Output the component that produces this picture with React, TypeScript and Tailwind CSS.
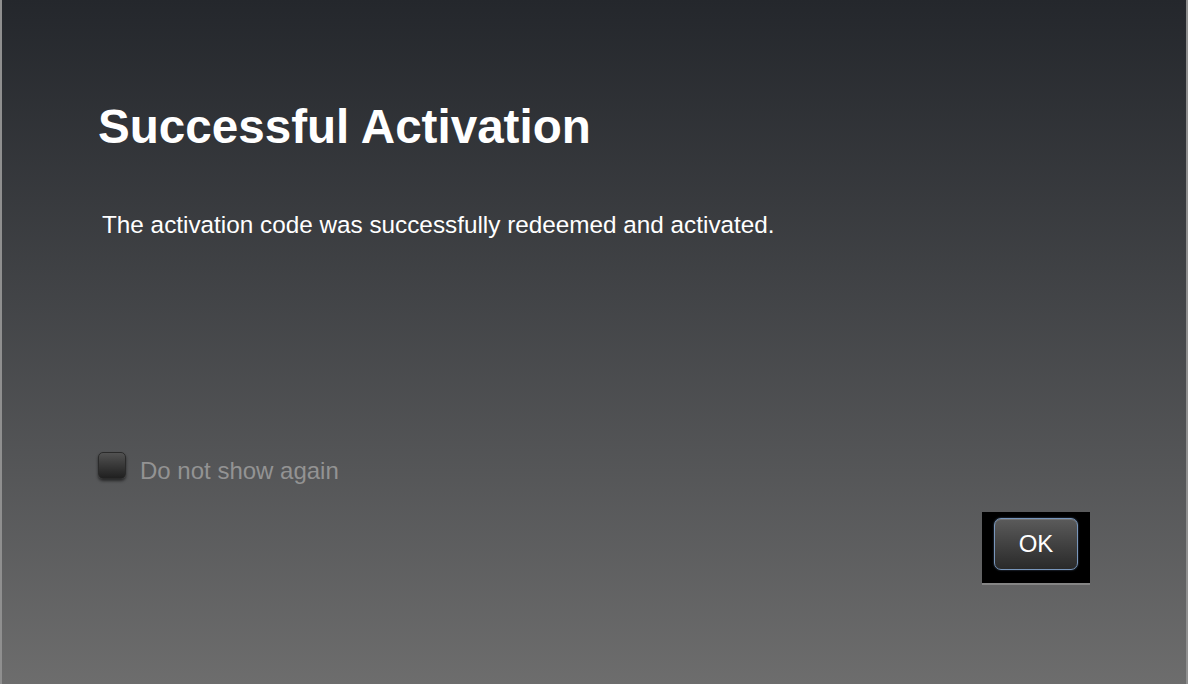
export default function App() {
  return (
    <div
      className="flex h-[684px] w-full flex-col border-x-2 border-[#8f8f8f] bg-linear-to-b from-[#24272c] to-[#6d6d6d] px-[96px] text-white"
      style={{ fontFamily: '"Liberation Sans", Arial, sans-serif' }}
    >
      <h1 className="mt-[103px] text-[47.6px] font-bold leading-[47px]">Successful Activation</h1>

      <p className="ml-[4px] mt-[63px] text-[24.3px] leading-[24px]">
        The activation code was successfully redeemed and activated.
      </p>

      <label className="mt-[215px] flex items-start gap-[14px]">
        <span className="h-[27px] w-[28px] rounded-[5px] border border-[#2a2a2a] bg-linear-to-b from-[#525252] to-[#202020] shadow-[0_2px_3px_rgba(0,0,0,0.55)]" />
        <span className="mt-[5px] text-[24px] leading-[27px] text-[#939393]">Do not show again</span>
      </label>

      <div className="mt-[28px] flex justify-end">
        <div className="h-[73px] w-[108px] border-b-2 border-[#858585] bg-black pl-[12px] pt-[6px]">
          <button className="flex h-[52px] w-[84px] items-center justify-center rounded-[7px] border border-[#7896bb] bg-linear-to-b from-[#5b5b5b] to-[#2a2a2a] text-[24px] text-white shadow-[inset_0_1px_0_rgba(255,255,255,0.15),0_0_2px_rgba(120,150,190,0.6)]">
            OK
          </button>
        </div>
      </div>
    </div>
  )
}
